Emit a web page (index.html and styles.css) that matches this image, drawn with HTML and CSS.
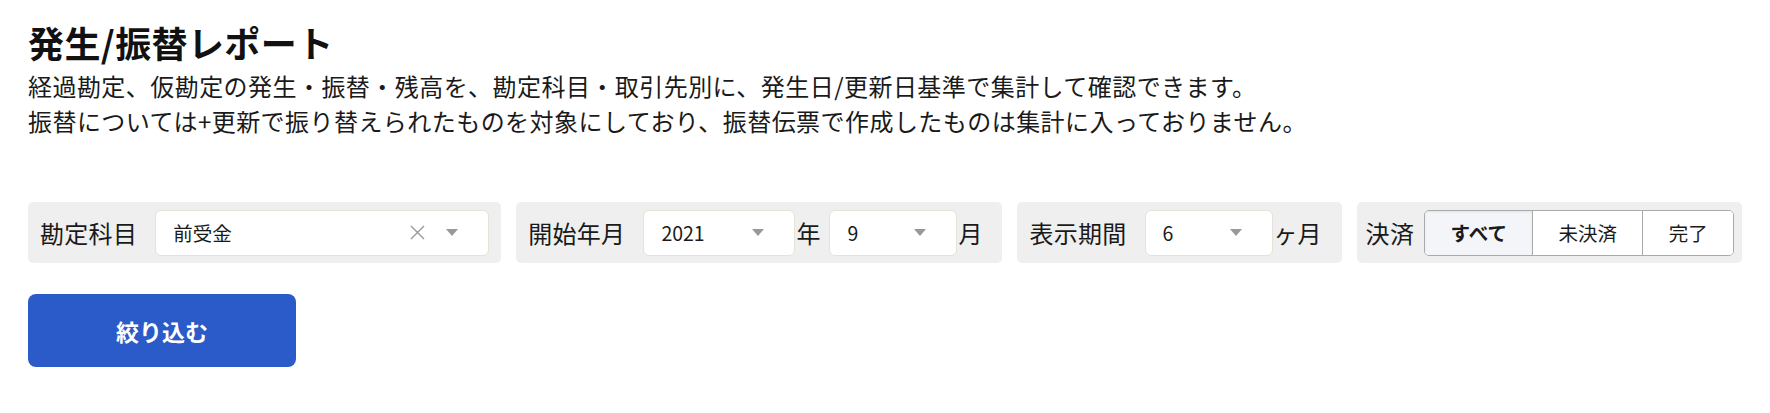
FILE: index.html
```html
<!DOCTYPE html>
<html lang="ja">
<head>
  <meta charset="UTF-8" />
  <meta name="viewport" content="width=device-width, initial-scale=1.0"/>
  <title>発生/振替レポート</title>
  <link rel="stylesheet" href="styles.css">
</head>
<body>
  <div class="page">
    <h1>発生/振替レポート</h1>
    <p class="lead">
      経過勘定、仮勘定の発生・振替・残高を、勘定科目・取引先別に、発生日/更新日基準で集計して確認できます。<br>
      振替については+更新で振り替えられたものを対象にしており、振替伝票で作成したものは集計に入っておりません。
    </p>

    <div class="filters">
      <div class="filter filter-account">
        <span class="label">勘定科目</span>
        <div class="select select-wide">
          <span class="value">前受金</span>
          <span class="clear">
            <svg width="15" height="15" viewBox="0 0 15 15"><path d="M1 1 L14 14 M14 1 L1 14" stroke="#999" stroke-width="1.4" fill="none"/></svg>
          </span>
          <span class="arrow"></span>
        </div>
      </div>

      <div class="filter filter-start">
        <span class="label">開始年月</span>
        <div class="select select-year">
          <span class="value">2021</span>
          <span class="arrow"></span>
        </div>
        <span class="suffix suffix-year">年</span>
        <div class="select select-small">
          <span class="value">9</span>
          <span class="arrow"></span>
        </div>
        <span class="suffix">月</span>
      </div>

      <div class="filter filter-period">
        <span class="label">表示期間</span>
        <div class="select select-small">
          <span class="value">6</span>
          <span class="arrow"></span>
        </div>
        <span class="suffix">ヶ月</span>
      </div>

      <div class="filter filter-status">
        <span class="label">決済</span>
        <div class="toggle">
          <button class="active">すべて</button>
          <button>未決済</button>
          <button>完了</button>
        </div>
      </div>
    </div>

    <button class="submit">絞り込む</button>
  </div>
</body>
</html>
```

FILE: styles.css
```css
body {
  margin: 0;
  font-family: "Noto Sans CJK JP", "Noto Sans", sans-serif;
  color: #1a1a1a;
  background: #fff;
}
.page {
  padding: 17px 27px 0 28px;
}
h1 {
  margin: 0;
  font-size: 36px;
  line-height: 50px;
  font-weight: 700;
  color: #111;
  letter-spacing: 0.4px;
}
.lead {
  margin: 1px 0 0;
  font-size: 24px;
  line-height: 35px;
  letter-spacing: 0.45px;
}
.filters {
  display: flex;
  gap: 15px;
  margin-top: 64px;
}
.filter {
  display: flex;
  align-items: center;
  height: 61px;
  padding: 0 12px;
  background: #efefef;
  border-radius: 5px;
  box-sizing: border-box;
  font-size: 24px;
}
.filter-status {
  padding: 0 8px 0 9px;
}
.label {
  margin-right: 18px;
  letter-spacing: 0.3px;
}
.filter-status .label {
  margin-right: 10px;
}
.select {
  position: relative;
  display: flex;
  align-items: center;
  height: 46px;
  padding-left: 17px;
  background: #fff;
  border: 1px solid #e6e2d6;
  border-radius: 6px;
  box-sizing: border-box;
  font-size: 19.5px;
}
.select-wide {
  width: 334px;
}
.select-year {
  width: 152px;
}
.select-small {
  width: 128px;
}
.value {
  flex: 1;
}
.clear {
  display: flex;
  margin-right: 21px;
}
.arrow {
  width: 0;
  height: 0;
  margin-right: 30px;
  border-left: 6.5px solid transparent;
  border-right: 6.5px solid transparent;
  border-top: 7px solid #999;
}
.suffix {
  margin: 0 8px 0 1px;
}
.suffix-year {
  margin-right: 9px;
}
.toggle {
  display: flex;
  height: 46px;
  border: 1px solid #aaa;
  border-radius: 5px;
  overflow: hidden;
  box-sizing: border-box;
}
.toggle button {
  padding: 0 24px;
  margin: 0;
  border: 0;
  border-left: 1px solid #aaa;
  background: #fff;
  font-family: inherit;
  font-size: 19.5px;
  color: #1a1a1a;
}
.toggle button:first-child {
  border-left: 0;
}
.toggle button.active {
  width: 107px;
  background: #f3f5f8;
  font-weight: 700;
  box-shadow: inset 0 1px 2px rgba(0, 0, 0, 0.08);
}
.toggle button:nth-child(2) {
  width: 110px;
}
.toggle button:nth-child(3) {
  width: 91px;
}
.submit {
  display: block;
  width: 268px;
  height: 73px;
  margin-top: 31px;
  border: 0;
  border-radius: 8px;
  background: #2a5bc8;
  color: #fff;
  font-family: inherit;
  font-size: 23px;
  font-weight: 700;
}
```
